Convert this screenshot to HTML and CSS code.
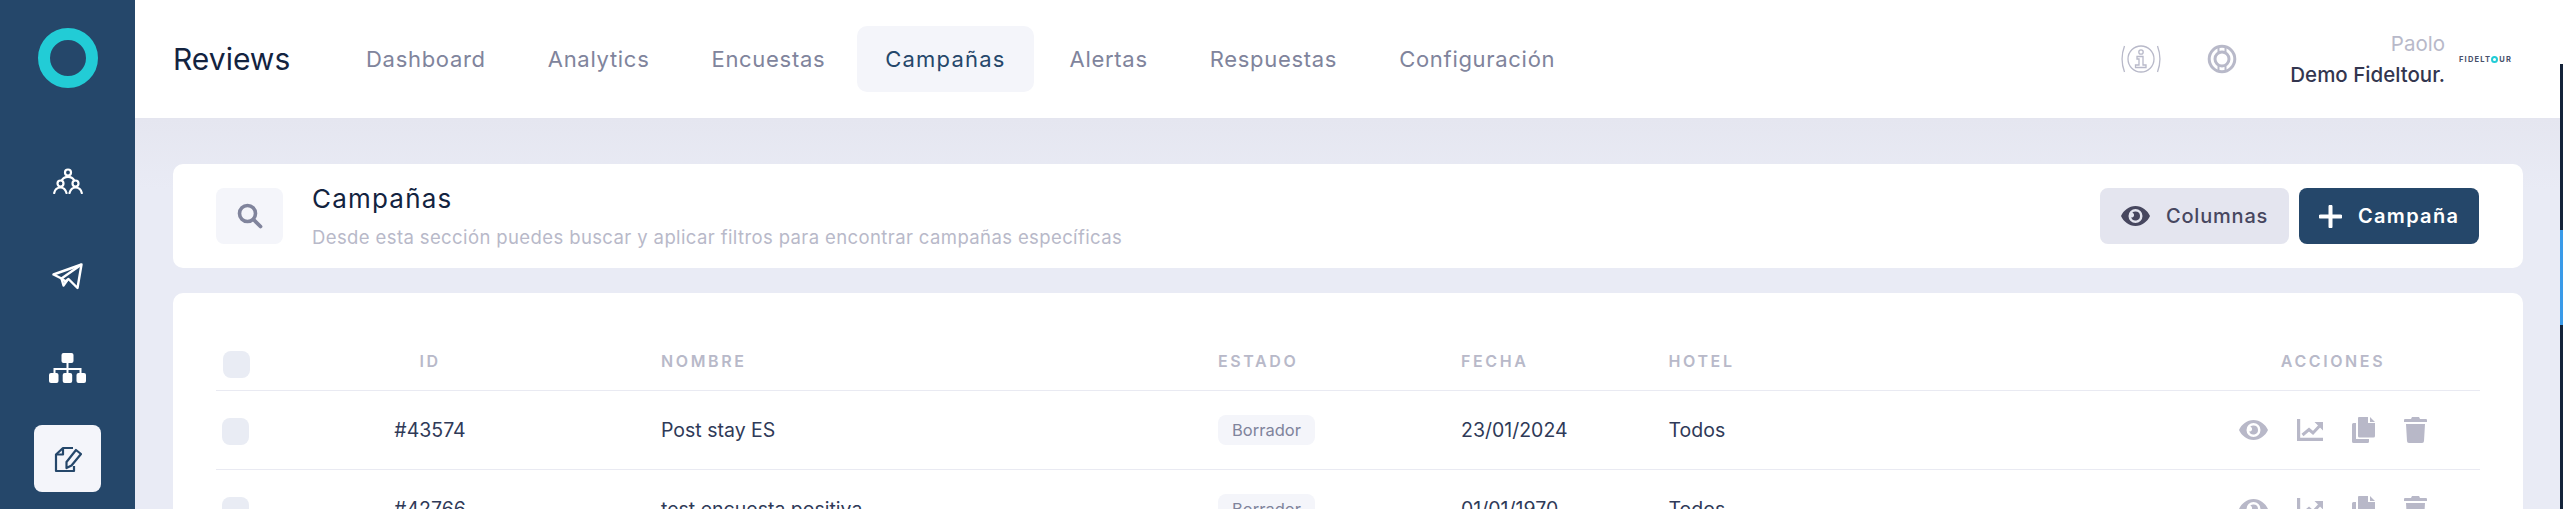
FILE: index.html
```html
<!DOCTYPE html>
<html lang="es">
<head>
<meta charset="utf-8">
<title>Reviews - Campañas</title>
<link rel="stylesheet" href="styles.css">
</head>
<body>
<div class="app">
  <aside class="sidebar">
    <div class="logo-ring"></div>
    <nav class="side-nav">
      <a class="side-item side-item-first">
        <svg width="30" height="26" viewBox="0 0 30 26" fill="none" stroke="#fff" stroke-width="2.2" stroke-linecap="round"><circle cx="15" cy="4.500" r="3"/><path d="M9 12c1-2 3.500-3.200 6-3.200s5 1.200 6 3.200"/><circle cx="7.500" cy="15.500" r="3"/><path d="M1.200 25c.8-3.500 3-5.500 6.300-5.500s5 2 6 5.500"/><circle cx="22.500" cy="15.500" r="3"/><path d="M16.500 25c1-3.500 2.700-5.500 6-5.500s5.500 2 6.300 5.500"/></svg>
      </a>
      <a class="side-item">
        <svg width="31" height="27" viewBox="0 0 31 27" fill="none" stroke="#fff" stroke-width="2.400" stroke-linejoin="round"><path d="M29.500 1.500 1.500 11.500l8 4 4 3 3-2.500 9 9z"/><path d="M29.500 1.500 9.500 15.500l2 7 3.500-5"/></svg>
      </a>
      <a class="side-item">
        <svg width="37" height="30" viewBox="0 0 37 30" fill="#fff"><rect x="12.500" y="0" width="12" height="10" rx="2"/><rect x="0" y="20" width="9.500" height="10" rx="2"/><rect x="13.700" y="20" width="9.500" height="10" rx="2"/><rect x="27.500" y="20" width="9.500" height="10" rx="2"/><path d="M17.500 10h2v5h13v5h-2v-3h-11v3h-2v-3h-11v3h-2v-5h13z"/></svg>
      </a>
      <a class="side-item side-item-active">
        <svg width="28" height="28" viewBox="0 0 28 28" fill="none" stroke="#25476a" stroke-width="2.200" stroke-linejoin="round"><path d="M19 3H9L2 9.500V26h18v-5"/><path d="M9 3v6.500H2"/><path d="m22 5 5 4-9.500 11.500-5 2.500v-6z"/></svg>
      </a>
    </nav>
  </aside>
  <main class="main">
    <header class="topbar">
      <div class="brand">Reviews</div>
      <nav class="tabs">
        <a class="tab">Dashboard</a>
        <a class="tab">Analytics</a>
        <a class="tab">Encuestas</a>
        <a class="tab tab-active">Campañas</a>
        <a class="tab">Alertas</a>
        <a class="tab">Respuestas</a>
        <a class="tab">Configuración</a>
      </nav>
      <div class="top-right">
        <svg class="top-info" width="40" height="30" viewBox="0 0 40 30" fill="none" stroke="#b8b9c9" stroke-width="1.300"><circle cx="20" cy="15" r="13"/><path d="M3.500 2C.5 10 .5 20 3.500 28"/><path d="M36.500 2c3 8 3 18 0 26"/><circle cx="20" cy="8" r="2.200"/><path d="M16 12.500h6V21h3v2.500H14.500V21H18v-6h-2z"/></svg>
        <svg class="top-help" width="30" height="30" viewBox="0 0 30 30" fill="none" stroke="#b8b9c9"><circle cx="15" cy="15" r="12.800" stroke-width="3"/><circle cx="15" cy="15" r="7" stroke-width="3"/><path d="M11.500 3v6M18.500 3v6M11.500 21v6M18.500 21v6" stroke-width="2"/></svg>
        <div class="user">
          <span class="user-name">Paolo</span>
          <span class="user-org">Demo Fideltour.</span>
        </div>
        <div class="mini-logo"><span>FIDELT</span><i class="mini-ring"></i><span>UR</span></div>
      </div>
    </header>
    <section class="content">
      <div class="card search-card">
        <div class="search-box">
          <svg width="26" height="26" viewBox="0 0 26 26" fill="none" stroke="#80849c"><circle cx="10.500" cy="10.500" r="8" stroke-width="3.600"/><path d="m16.500 16.500 7 7" stroke-width="3.800" stroke-linecap="round"/></svg>
        </div>
        <div class="search-text">
          <h1 class="search-title">Campañas</h1>
          <p class="search-sub">Desde esta sección puedes buscar y aplicar filtros para encontrar campañas específicas</p>
        </div>
        <button class="btn btn-light">
          <svg width="29" height="20" viewBox="0 0 29 20"><path fill="#47475f" fill-rule="evenodd" d="M14.500 0C21 0 26.500 4.500 29 10c-2.500 5.500-8 10-14.500 10S2.500 15.500 0 10C2.500 4.500 8 0 14.500 0zm0 3a7 7 0 1 0 0 14 7 7 0 0 0 0-14zm0 2.500a4.500 4.500 0 1 1-4.300 5.800c1.700.6 3.300-1 2.800-2.800-.3-1-1-1.700-1.800-2 1-.7 2.100-1 3.300-1z"/></svg>
          <span>Columnas</span>
        </button>
        <button class="btn btn-primary">
          <svg width="23" height="23" viewBox="0 0 23 23"><path fill="#fff" d="M9.500 1.500a2 2 0 0 1 4 0V9.500h8a2 2 0 0 1 0 4h-8v8a2 2 0 0 1-4 0v-8h-8a2 2 0 0 1 0-4h8z"/></svg>
          <span>Campaña</span>
        </button>
      </div>
      <div class="card table-card">
        <div class="row row-head">
          <div class="cell-check"><i class="check check-head"></i></div>
          <div class="cell-id">ID</div>
          <div class="cell-name">NOMBRE</div>
          <div class="cell-state">ESTADO</div>
          <div class="cell-date">FECHA</div>
          <div class="cell-hotel">HOTEL</div>
          <div class="cell-actions">ACCIONES</div>
        </div>
        <div class="row">
          <div class="cell-check"><i class="check"></i></div>
          <div class="cell-id">#43574</div>
          <div class="cell-name">Post stay ES</div>
          <div class="cell-state"><span class="badge">Borrador</span></div>
          <div class="cell-date">23/01/2024</div>
          <div class="cell-hotel">Todos</div>
          <div class="cell-actions">
            <div class="action-icons">
              <svg width="29" height="20" viewBox="0 0 29 20"><use href="#ic-eye"/></svg>
              <svg width="26" height="22" viewBox="0 0 26 22"><use href="#ic-chart"/></svg>
              <svg width="23" height="26" viewBox="0 0 23 26"><use href="#ic-copy"/></svg>
              <svg width="23" height="26" viewBox="0 0 23 26"><use href="#ic-trash"/></svg>
            </div>
          </div>
        </div>
        <div class="row">
          <div class="cell-check"><i class="check"></i></div>
          <div class="cell-id">#42766</div>
          <div class="cell-name">test encuesta positiva</div>
          <div class="cell-state"><span class="badge">Borrador</span></div>
          <div class="cell-date">01/01/1970</div>
          <div class="cell-hotel">Todos</div>
          <div class="cell-actions">
            <div class="action-icons">
              <svg width="29" height="20" viewBox="0 0 29 20"><use href="#ic-eye"/></svg>
              <svg width="26" height="22" viewBox="0 0 26 22"><use href="#ic-chart"/></svg>
              <svg width="23" height="26" viewBox="0 0 23 26"><use href="#ic-copy"/></svg>
              <svg width="23" height="26" viewBox="0 0 23 26"><use href="#ic-trash"/></svg>
            </div>
          </div>
        </div>
      </div>
    </section>
  </main>
</div>
<svg class="defs" width="0" height="0">
  <defs>
    <path id="ic-eye" fill="#b8b8c8" fill-rule="evenodd" d="M14.500 0C21 0 26.500 4.500 29 10c-2.500 5.500-8 10-14.500 10S2.500 15.500 0 10C2.500 4.500 8 0 14.500 0zm0 3a7 7 0 1 0 0 14 7 7 0 0 0 0-14zm0 2.500a4.500 4.500 0 1 1-4.300 5.800c1.700.6 3.300-1 2.800-2.800-.3-1-1-1.700-1.800-2 1-.7 2.100-1 3.300-1z"/>
    <g id="ic-chart">
      <path fill="#b8b8c8" d="M0 0h3.200v18.800H26V22H0zM17.500 3H26v8.500z"/>
      <path fill="none" stroke="#b8b8c8" stroke-width="3" d="M5.500 16 12 10.500l4 3.500 6.500-7"/>
    </g>
    <path id="ic-copy" fill="#b8b8c8" d="M7 0h9v6h7v13a1.500 1.500 0 0 1-1.500 1.500h-14A1.500 1.500 0 0 1 6 19V1a1 1 0 0 1 1-1zM18 0l5 5h-5zM0 7.500A1.500 1.500 0 0 1 1.500 6H4v16h13v2.500a1.500 1.500 0 0 1-1.500 1.500h-14A1.500 1.500 0 0 1 0 24.500z"/>
    <path id="ic-trash" fill="#b8b8c8" d="M8 0h7l1 2h6a1 1 0 0 1 1 1v2H0V3a1 1 0 0 1 1-1h6zM2 7h19l-1 17a2 2 0 0 1-2 2H5a2 2 0 0 1-2-2z"/>
  </defs>
</svg>
<div class="edge"><i class="edge-dark"></i><i class="edge-blue"></i><i class="edge-rest"></i></div>
</body>
</html>
```
FILE: styles.css
```css
* { box-sizing: border-box; }
html, body { margin: 0; height: 100%; overflow: hidden; }
body { font-family: Inter, "Open Sans", sans-serif; background: #e9ebf5; color: #33364f; }
.defs { position: absolute; }
.app { display: flex; height: 509px; overflow: hidden; }

.sidebar { width: 135px; flex: none; background: #25476a; display: flex; flex-direction: column; align-items: center; }
.logo-ring { width: 60px; height: 60px; border: 12px solid #22ccd6; border-radius: 50%; margin-top: 28px; }
.side-nav { display: flex; flex-direction: column; align-items: center; gap: 24px; margin-top: 64px; }
.side-item { width: 67px; height: 67px; display: flex; align-items: center; justify-content: center; border-radius: 8px; }
.side-item-first { padding-bottom: 9px; }
.side-item-active { background: #f4f5fa; }

.main { flex: 1; min-width: 0; display: flex; flex-direction: column; }
.topbar { height: 119px; flex: none; background: #fff; display: flex; align-items: center; padding-left: 38px; padding-right: 50px; border-bottom: 1px solid #e4e5ef; }
.brand { font-size: 30px; font-weight: 400; color: #13233f; width: 193px; flex: none; }
.tabs { display: flex; align-items: center; }
.tab { font-size: 22px; color: #80849c; padding: 0 31px; height: 66px; display: flex; align-items: center; border-radius: 10px; letter-spacing: .7px; }
.tab:first-child { padding-left: 0; }
.tab-active { background: #f4f5fa; color: #25476a; padding: 0 28px; margin: 0 5px 0 1px; letter-spacing: 1.200px; }
.top-right { margin-left: auto; display: flex; align-items: center; }
.top-info { margin-right: 46px; }
.top-help { margin-right: 53px; }
.user { display: flex; flex-direction: column; align-items: flex-end; gap: 6px; }
.user-name { font-size: 20.500px; color: #b8b9c9; }
.user-org { font-size: 20.500px; font-weight: 500; color: #33364f; }
.mini-logo { display: flex; align-items: center; margin-left: 14px; width: 54px; font-size: 7.500px; font-weight: 700; letter-spacing: 1.200px; color: #47506a; }
.mini-ring { width: 7px; height: 7px; border: 2px solid #22ccd6; border-radius: 50%; margin-right: 1px; flex: none; }

.content { flex: 1; padding: 45px 40px 0 38px; display: flex; flex-direction: column; gap: 25px; background: linear-gradient(#e5e6f0, #e9ebf5 70px); }
.card { background: #fff; border-radius: 10px; }
.search-card { height: 104px; flex: none; display: flex; align-items: center; padding: 0 44px 0 43px; }
.search-box { width: 67px; height: 56px; background: #f4f5fa; border-radius: 8px; display: flex; align-items: center; justify-content: center; margin-right: 29px; flex: none; }
.search-text { flex: 1; min-width: 0; }
.search-title { margin: 0; font-size: 26px; font-weight: 400; color: #13233f; letter-spacing: 1.200px; line-height: 30px; }
.search-sub { margin: 11px 0 0; font-size: 18.500px; color: #b8b9c9; line-height: 24px; letter-spacing: .39px; }
.btn { height: 56px; border: 0; border-radius: 8px; display: flex; align-items: center; font-family: inherit; font-size: 20px; font-weight: 500; padding: 0; }
.btn-light { width: 189px; background: #e4e5ef; color: #47475f; margin-right: 10px; padding-left: 21px; gap: 16px; letter-spacing: .8px; }
.btn-primary { width: 180px; background: #25476a; color: #fff; padding-left: 20px; gap: 16px; font-weight: 600; letter-spacing: 1.300px; }

.table-card { flex: none; padding: 0 43px; height: 300px; }
.row { display: grid; grid-template-columns: 100px 345px 557px 243px 207.500px 1fr 294px; height: 79px; align-items: center; border-bottom: 1px solid #e9eaf2; font-size: 19.500px; color: #2f3a58; }
.row-head { height: 98px; padding-top: 38px; font-size: 16px; font-weight: 600; letter-spacing: 2.600px; color: #b8b9c9; }
.cell-check { padding-left: 6px; padding-top: 3px; display: flex; }
.row-head .cell-check { padding-top: 7px; }
.check { width: 27px; height: 27px; border-radius: 8px; background: #e9ecf4; display: block; }
.check-head { margin-left: 1px; }
.cell-id { text-align: center; padding-right: 117px; }
.badge { display: inline-flex; align-items: center; justify-content: center; width: 97px; height: 30px; border-radius: 8px; background: #f4f5fa; color: #80849c; font-size: 16.500px; vertical-align: middle; }
.cell-actions { text-align: center; }
.action-icons { display: flex; align-items: center; justify-content: center; gap: 29px; }

.edge { position: absolute; right: 0; top: 64px; width: 3px; display: flex; flex-direction: column; }
.edge-dark { display: block; height: 166px; background: #14233a; }
.edge-blue { display: block; height: 95px; background: #3a9ae8; }
.edge-rest { display: block; height: 184px; background: #14233a; }
```
